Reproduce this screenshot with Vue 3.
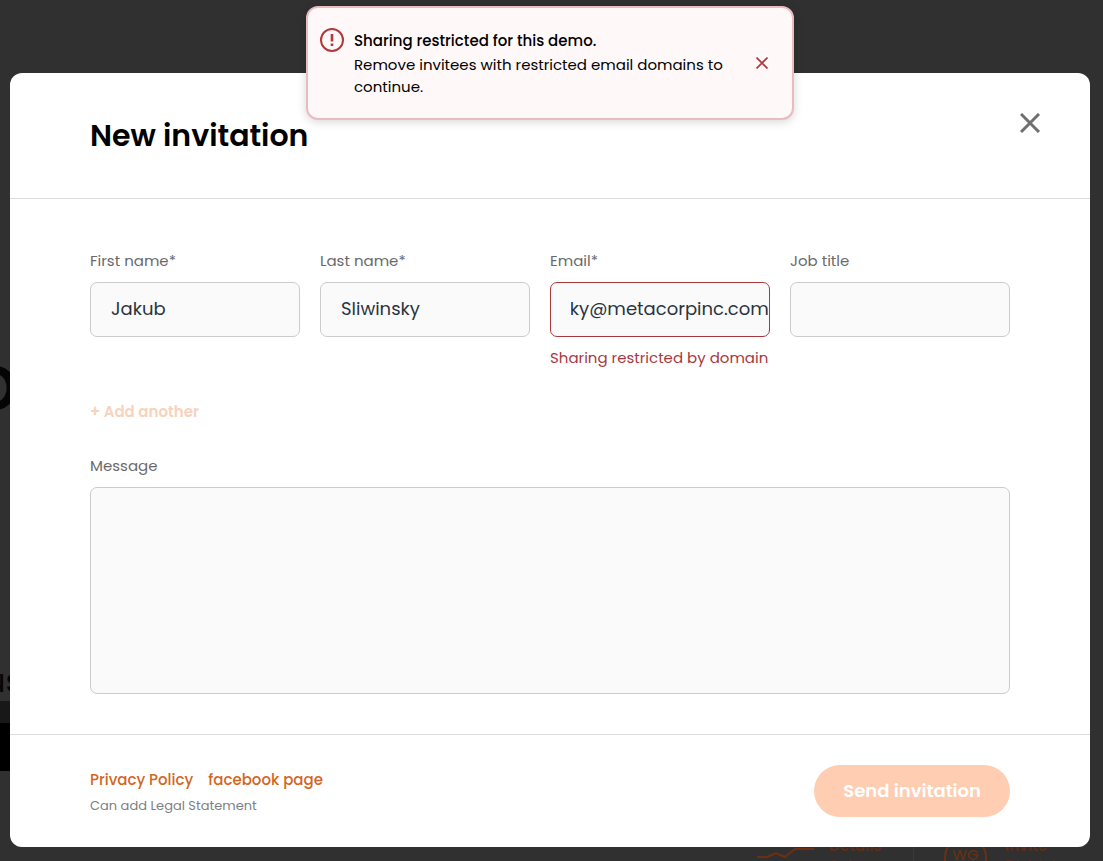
<script setup>
import { ref, onMounted, nextTick } from 'vue'

const firstName = ref('Jakub')
const lastName = ref('Sliwinsky')
const email = ref('jakub.sliwinsky@metacorpinc.com')
const jobTitle = ref('')
const message = ref('')
const emailInput = ref(null)

onMounted(async () => {
  await nextTick()
  emailInput.value.scrollLeft = emailInput.value.scrollWidth
})
</script>

<template>
  <div class="page">
    <div class="backdrop" aria-hidden="true">
      <span class="bg-letter">o</span>
      <span class="bg-word">us</span>
      <div class="bg-bar"></div>
      <div class="bg-card bg-details">
        <svg width="58" height="24" viewBox="0 0 58 24" fill="none">
          <path d="M0 14H10L19 10L28 14L38 6H57" stroke="#6b3013" stroke-width="2" />
        </svg>
        <p>Details<br /><span>Sales</span></p>
      </div>
      <div class="bg-divider"></div>
      <div class="bg-card bg-invite">
        <span class="bg-avatar">WG</span>
        <p>Invite<br /><span>District</span></p>
      </div>
    </div>

    <main class="modal" role="dialog" aria-labelledby="dialog-title">
      <header class="modal-header">
        <h1 id="dialog-title">New invitation</h1>
        <button class="icon-button" type="button" aria-label="Close dialog">
          <svg width="20" height="20" viewBox="0 0 20 20" fill="none">
            <path d="M1 1L19 19M19 1L1 19" stroke="#6f6f6f" stroke-width="3" />
          </svg>
        </button>
      </header>

      <form id="invite-form" class="modal-body" @submit.prevent>
        <div class="fields">
          <div class="field">
            <label for="first-name">First name*</label>
            <input id="first-name" v-model="firstName" type="text" />
          </div>
          <div class="field">
            <label for="last-name">Last name*</label>
            <input id="last-name" v-model="lastName" type="text" />
          </div>
          <div class="field">
            <label for="email">Email*</label>
            <input
              id="email"
              ref="emailInput"
              v-model="email"
              class="invalid"
              type="text"
              aria-invalid="true"
              aria-describedby="email-error"
            />
            <p id="email-error" class="error">Sharing restricted by domain</p>
          </div>
          <div class="field">
            <label for="job-title">Job title</label>
            <input id="job-title" v-model="jobTitle" type="text" />
          </div>
        </div>

        <button class="add-another" type="button" disabled>+ Add another</button>

        <div class="field">
          <label for="message">Message</label>
          <textarea id="message" v-model="message"></textarea>
        </div>
      </form>

      <footer class="modal-footer">
        <div class="legal">
          <nav class="links">
            <a href="#privacy">Privacy Policy</a>
            <a href="#facebook">facebook page</a>
          </nav>
          <p>Can add Legal Statement</p>
        </div>
        <button class="send" type="submit" form="invite-form" disabled>Send invitation</button>
      </footer>
    </main>

    <div class="toast" role="alert">
      <svg class="toast-icon" width="24" height="24" viewBox="0 0 24 24" fill="none">
        <circle cx="12" cy="12" r="11" stroke="#b03a3e" stroke-width="2" />
        <path d="M12 6V13.5M12 15.5V18" stroke="#b03a3e" stroke-width="2.6" />
      </svg>
      <div class="toast-text">
        <strong>Sharing restricted for this demo.</strong>
        <p>Remove invitees with restricted email domains to continue.</p>
      </div>
      <button class="icon-button" type="button" aria-label="Dismiss alert">
        <svg width="12" height="12" viewBox="0 0 12 12" fill="none">
          <path d="M0.5 0.5L11.5 11.5M11.5 0.5L0.5 11.5" stroke="#b03a3e" stroke-width="1.7" />
        </svg>
      </button>
    </div>
  </div>
</template>

<style>
html,
body {
  background: #303030;
}
body {
  margin: 0;
}
</style>

<style scoped>
.page {
  position: relative;
  min-height: 100vh;
  box-sizing: border-box;
  padding: 73px 13px 14px 10px;
  overflow: hidden;
  background: #303030;
  font-family: Poppins, Inter, "Liberation Sans", sans-serif;
  font-size: 15px;
  line-height: 24px;
  color: #000;
}
h1,
p {
  margin: 0;
}
button,
input,
textarea {
  font: inherit;
}
button {
  border: 0;
  padding: 0;
  background: none;
}
.icon-button {
  display: flex;
}

.backdrop {
  position: absolute;
  inset: 0;
  overflow: hidden;
}
.bg-letter {
  position: absolute;
  left: -32px;
  top: 334px;
  font-size: 80px;
  line-height: 96px;
  font-weight: 500;
  color: #050505;
}
.bg-word {
  position: absolute;
  left: -15px;
  top: 663px;
  font-size: 32px;
  line-height: 36px;
  color: #050505;
}
.bg-bar {
  position: absolute;
  left: 0;
  top: 701px;
  width: 40px;
  height: 48px;
  border-top: 22px solid #181818;
  background: #000;
}
.bg-divider {
  position: absolute;
  left: 913px;
  bottom: 0;
  width: 1px;
  height: 40px;
  background: #3a3a3a;
}
.bg-card {
  position: absolute;
  top: 836px;
  display: flex;
  line-height: 19px;
  font-weight: 600;
  color: #5c2e18;
}
.bg-card p span {
  font-weight: 400;
  color: #552c1a;
}
.bg-details {
  left: 757px;
  gap: 14px;
}
.bg-details svg {
  margin-top: 7px;
}
.bg-invite {
  left: 944px;
  gap: 18px;
}
.bg-avatar {
  box-sizing: border-box;
  width: 43px;
  height: 43px;
  border: 2px solid #6b3013;
  border-radius: 50%;
  line-height: 33px;
  text-align: center;
  font-weight: 400;
  color: #6b3013;
}

.modal {
  position: relative;
  border-radius: 12px;
  background: #fff;
}
.modal-header {
  display: flex;
  justify-content: space-between;
  align-items: flex-start;
  padding: 40px 50px 40px 80px;
  border-bottom: 1px solid #dcdcdc;
}
.modal-header h1 {
  font-size: 30px;
  line-height: 45px;
  font-weight: 600;
}
.modal-body {
  padding: 50px 80px 40px;
}
.fields {
  display: grid;
  grid-template-columns: 21fr 21fr 22fr 22fr;
  gap: 20px;
}
.field {
  display: flex;
  flex-direction: column;
  gap: 9px;
  min-width: 0;
}
label {
  color: #6a6a6a;
}
input,
textarea {
  box-sizing: border-box;
  width: 100%;
  border: 1px solid #ccc;
  border-radius: 7px;
  background: #fafafa;
  color: #2a3440;
  font-size: 18px;
  outline: none;
}
input {
  height: 55px;
  padding: 0 0 2px 20px;
}
.invalid {
  border-color: #a8383c;
}
textarea {
  display: block;
  height: 207px;
  padding: 14px 20px;
  resize: none;
}
.error {
  color: #a8383c;
}
.add-another {
  display: block;
  margin: 30px 0;
  font-weight: 600;
  color: #f7d3bd;
}
.modal-footer {
  display: flex;
  justify-content: space-between;
  align-items: center;
  padding: 30px 80px;
  border-top: 1px solid #dcdcdc;
}
.legal {
  display: flex;
  flex-direction: column;
  gap: 3px;
  padding-top: 3px;
}
.legal p {
  font-size: 13px;
  line-height: 22px;
  color: #808080;
}
.links {
  display: flex;
  gap: 15px;
}
.links a {
  font-weight: 500;
  color: #d2661f;
  text-decoration: none;
}
.send {
  height: 52px;
  padding: 0 29px;
  border-radius: 26px;
  background: #ffcdb2;
  color: #fff;
  font-size: 18px;
  font-weight: 600;
}

.toast {
  position: absolute;
  top: 6px;
  left: 0;
  right: 3px;
  margin: 0 auto;
  box-sizing: border-box;
  width: 488px;
  max-width: 90%;
  display: flex;
  align-items: center;
  gap: 10px;
  padding: 20px 24px 20px 12px;
  border: 2px solid #e9bcc2;
  border-radius: 12px;
  background: #fff8f8;
  box-shadow: 0 2px 10px rgba(0, 0, 0, 0.16);
}
.toast-icon {
  align-self: flex-start;
  flex: none;
}
.toast-text {
  flex: 1;
  line-height: 22px;
}
.toast-text strong {
  display: block;
  line-height: 26px;
  font-weight: 500;
}
</style>
